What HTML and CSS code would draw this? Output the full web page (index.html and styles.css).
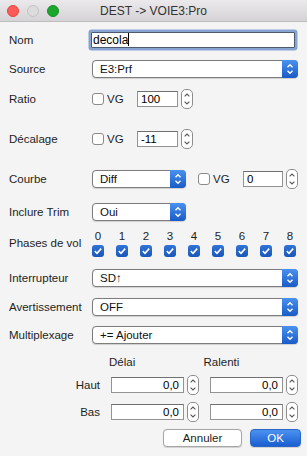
FILE: index.html
```html
<!DOCTYPE html>
<html lang="fr">
<head>
    <meta charset="UTF-8">
    <title>DEST -> VOIE3:Pro</title>
    <link rel="stylesheet" href="styles.css">
</head>
<body>
    <div class="titlebar">
        <div class="lights">
            <span class="light red"></span>
            <span class="light idle"></span>
            <span class="light green"></span>
        </div>
        <div class="title">DEST -&gt; VOIE3:Pro</div>
        <div></div>
    </div>

    <div class="form">
        <div class="row r-nom">
            <span class="label">Nom</span>
            <div class="text-field focused">decola<span class="caret"></span></div>
        </div>

        <div class="row r-source">
            <span class="label">Source</span>
            <div class="select">
                <span class="value">E3:Prf</span>
                <span class="arrows"><svg width="16" height="18" viewBox="0 0 16 18"><path d="M5.5 7.2 L8 4.7 L10.5 7.2 M5.5 10.8 L8 13.3 L10.5 10.8" fill="none" stroke="#fff" stroke-width="1.4"/></svg></span>
            </div>
        </div>

        <div class="row r-ratio">
            <span class="label">Ratio</span>
            <span class="check"></span>
            <span class="vg">VG</span>
            <div class="num">100</div>
            <svg class="stepper" width="12" height="20" viewBox="0 0 12 20"><rect x="0.5" y="0.5" width="11" height="19" rx="4.5" fill="#fff" stroke="#8d8d8d"/><path d="M3.6 7.4 L6 5 L8.4 7.4 M3.6 12.6 L6 15 L8.4 12.6" fill="none" stroke="#555" stroke-width="1.1"/></svg>
        </div>

        <div class="row r-decalage">
            <span class="label">Décalage</span>
            <span class="check"></span>
            <span class="vg">VG</span>
            <div class="num">-11</div>
            <svg class="stepper" width="12" height="20" viewBox="0 0 12 20"><rect x="0.5" y="0.5" width="11" height="19" rx="4.5" fill="#fff" stroke="#8d8d8d"/><path d="M3.6 7.4 L6 5 L8.4 7.4 M3.6 12.6 L6 15 L8.4 12.6" fill="none" stroke="#555" stroke-width="1.1"/></svg>
        </div>

        <div class="row r-courbe">
            <span class="label">Courbe</span>
            <div class="select short">
                <span class="value">Diff</span>
                <span class="arrows"><svg width="16" height="18" viewBox="0 0 16 18"><path d="M5.5 7.2 L8 4.7 L10.5 7.2 M5.5 10.8 L8 13.3 L10.5 10.8" fill="none" stroke="#fff" stroke-width="1.4"/></svg></span>
            </div>
            <span class="check after-select"></span>
            <span class="vg">VG</span>
            <div class="num">0</div>
            <svg class="stepper" width="12" height="20" viewBox="0 0 12 20"><rect x="0.5" y="0.5" width="11" height="19" rx="4.5" fill="#fff" stroke="#8d8d8d"/><path d="M3.6 7.4 L6 5 L8.4 7.4 M3.6 12.6 L6 15 L8.4 12.6" fill="none" stroke="#555" stroke-width="1.1"/></svg>
        </div>

        <div class="row r-trim">
            <span class="label">Inclure Trim</span>
            <div class="select short">
                <span class="value">Oui</span>
                <span class="arrows"><svg width="16" height="18" viewBox="0 0 16 18"><path d="M5.5 7.2 L8 4.7 L10.5 7.2 M5.5 10.8 L8 13.3 L10.5 10.8" fill="none" stroke="#fff" stroke-width="1.4"/></svg></span>
            </div>
        </div>

        <div class="row r-phases">
            <span class="label">Phases de vol</span>
            <div class="phases">
                <span class="phase-num">0</span>
                <span class="phase-num">1</span>
                <span class="phase-num">2</span>
                <span class="phase-num">3</span>
                <span class="phase-num">4</span>
                <span class="phase-num">5</span>
                <span class="phase-num">6</span>
                <span class="phase-num">7</span>
                <span class="phase-num">8</span>
                <span class="check on"><svg width="12" height="12" viewBox="0 0 12 12"><path d="M2.8 6.1 L5 8.3 L9.2 3.6" fill="none" stroke="#fff" stroke-width="1.6"/></svg></span>
                <span class="check on"><svg width="12" height="12" viewBox="0 0 12 12"><path d="M2.8 6.1 L5 8.3 L9.2 3.6" fill="none" stroke="#fff" stroke-width="1.6"/></svg></span>
                <span class="check on"><svg width="12" height="12" viewBox="0 0 12 12"><path d="M2.8 6.1 L5 8.3 L9.2 3.6" fill="none" stroke="#fff" stroke-width="1.6"/></svg></span>
                <span class="check on"><svg width="12" height="12" viewBox="0 0 12 12"><path d="M2.8 6.1 L5 8.3 L9.2 3.6" fill="none" stroke="#fff" stroke-width="1.6"/></svg></span>
                <span class="check on"><svg width="12" height="12" viewBox="0 0 12 12"><path d="M2.8 6.1 L5 8.3 L9.2 3.6" fill="none" stroke="#fff" stroke-width="1.6"/></svg></span>
                <span class="check on"><svg width="12" height="12" viewBox="0 0 12 12"><path d="M2.8 6.1 L5 8.3 L9.2 3.6" fill="none" stroke="#fff" stroke-width="1.6"/></svg></span>
                <span class="check on"><svg width="12" height="12" viewBox="0 0 12 12"><path d="M2.8 6.1 L5 8.3 L9.2 3.6" fill="none" stroke="#fff" stroke-width="1.6"/></svg></span>
                <span class="check on"><svg width="12" height="12" viewBox="0 0 12 12"><path d="M2.8 6.1 L5 8.3 L9.2 3.6" fill="none" stroke="#fff" stroke-width="1.6"/></svg></span>
                <span class="check on"><svg width="12" height="12" viewBox="0 0 12 12"><path d="M2.8 6.1 L5 8.3 L9.2 3.6" fill="none" stroke="#fff" stroke-width="1.6"/></svg></span>
            </div>
        </div>

        <div class="row r-inter">
            <span class="label">Interrupteur</span>
            <div class="select">
                <span class="value">SD↑</span>
                <span class="arrows"><svg width="16" height="18" viewBox="0 0 16 18"><path d="M5.5 7.2 L8 4.7 L10.5 7.2 M5.5 10.8 L8 13.3 L10.5 10.8" fill="none" stroke="#fff" stroke-width="1.4"/></svg></span>
            </div>
        </div>

        <div class="row r-avert">
            <span class="label">Avertissement</span>
            <div class="select">
                <span class="value">OFF</span>
                <span class="arrows"><svg width="16" height="18" viewBox="0 0 16 18"><path d="M5.5 7.2 L8 4.7 L10.5 7.2 M5.5 10.8 L8 13.3 L10.5 10.8" fill="none" stroke="#fff" stroke-width="1.4"/></svg></span>
            </div>
        </div>

        <div class="row r-multi">
            <span class="label">Multiplexage</span>
            <div class="select">
                <span class="value">+= Ajouter</span>
                <span class="arrows"><svg width="16" height="18" viewBox="0 0 16 18"><path d="M5.5 7.2 L8 4.7 L10.5 7.2 M5.5 10.8 L8 13.3 L10.5 10.8" fill="none" stroke="#fff" stroke-width="1.4"/></svg></span>
            </div>
        </div>

        <div class="row r-heads">
            <span class="head-spacer"></span>
            <span class="head">Délai</span>
            <span class="head">Ralenti</span>
        </div>

        <div class="row r-haut">
            <span class="label right">Haut</span>
            <div class="num wide">0,0</div>
            <svg class="stepper" width="12" height="20" viewBox="0 0 12 20"><rect x="0.5" y="0.5" width="11" height="19" rx="4.5" fill="#fff" stroke="#8d8d8d"/><path d="M3.6 7.4 L6 5 L8.4 7.4 M3.6 12.6 L6 15 L8.4 12.6" fill="none" stroke="#555" stroke-width="1.1"/></svg>
            <div class="num wide second">0,0</div>
            <svg class="stepper" width="12" height="20" viewBox="0 0 12 20"><rect x="0.5" y="0.5" width="11" height="19" rx="4.5" fill="#fff" stroke="#8d8d8d"/><path d="M3.6 7.4 L6 5 L8.4 7.4 M3.6 12.6 L6 15 L8.4 12.6" fill="none" stroke="#555" stroke-width="1.1"/></svg>
        </div>

        <div class="row r-bas">
            <span class="label right">Bas</span>
            <div class="num wide">0,0</div>
            <svg class="stepper" width="12" height="20" viewBox="0 0 12 20"><rect x="0.5" y="0.5" width="11" height="19" rx="4.5" fill="#fff" stroke="#8d8d8d"/><path d="M3.6 7.4 L6 5 L8.4 7.4 M3.6 12.6 L6 15 L8.4 12.6" fill="none" stroke="#555" stroke-width="1.1"/></svg>
            <div class="num wide second">0,0</div>
            <svg class="stepper" width="12" height="20" viewBox="0 0 12 20"><rect x="0.5" y="0.5" width="11" height="19" rx="4.5" fill="#fff" stroke="#8d8d8d"/><path d="M3.6 7.4 L6 5 L8.4 7.4 M3.6 12.6 L6 15 L8.4 12.6" fill="none" stroke="#555" stroke-width="1.1"/></svg>
        </div>

        <div class="row r-buttons">
            <button class="btn">Annuler</button>
            <button class="btn primary">OK</button>
        </div>
    </div>
</body>
</html>
```

FILE: styles.css
```css
body {
    margin: 0;
    background: #f4f4f4;
    font-family: "Liberation Sans", Arial, sans-serif;
    font-size: 11.5px;
    color: #1e1e1e;
}
.titlebar {
    height: 21px;
    border-bottom: 1px solid #bdbdbd;
    background: linear-gradient(#ebe9eb, #d5d3d5);
    display: grid;
    grid-template-columns: 1fr auto 1fr;
    align-items: center;
}
.lights {
    display: flex;
    gap: 8px;
    padding-left: 7px;
    padding-top: 1px;
}
.light {
    width: 12px;
    height: 12px;
    border-radius: 50%;
    box-sizing: border-box;
}
.light.red {
    background: #fc5b57;
    border: 1px solid #e2443f;
}
.light.idle {
    background: #dcdcdc;
    border: 1px solid #c4c4c4;
}
.light.green {
    background: #1ba72b;
    border: 1px solid #15902a;
}
.title {
    font-size: 12px;
    color: #333;
    padding-top: 1px;
}
.form {
    padding: 0 9px;
}
.row {
    display: flex;
    align-items: center;
    height: 20px;
}
.label {
    width: 83px;
    flex: none;
}
.label.right {
    width: 91px;
    text-align: right;
    margin-right: 11px;
}
.r-nom { margin-top: 8px; }
.r-source { margin-top: 9px; }
.r-ratio { margin-top: 10px; }
.r-decalage { margin-top: 20px; }
.r-courbe { margin-top: 20px; }
.r-trim { margin-top: 13px; }
.r-phases { margin-top: 7px; height: 28px; }
.r-inter { margin-top: 11px; }
.r-avert { margin-top: 9px; }
.r-multi { margin-top: 8px; }
.r-heads { margin-top: 7px; }
.r-haut { margin-top: 3px; }
.r-bas { margin-top: 7px; }
.r-buttons {
    margin-top: 6px;
    justify-content: flex-end;
    gap: 8px;
    margin-right: -3px;
}
.text-field {
    width: 204px;
    height: 16px;
    margin-left: -1px;
    box-sizing: border-box;
    background: #fff;
    border: 1px solid #4d5b6e;
    box-shadow: 0 0 0 2.5px #86a4cf;
    border-radius: 1px;
    padding-left: 1px;
    line-height: 14px;
    font-size: 12px;
    color: #000;
}
.caret {
    display: inline-block;
    width: 1px;
    height: 13px;
    background: #000;
    vertical-align: -2px;
}
.select {
    display: flex;
    width: 206px;
    height: 18px;
    box-sizing: border-box;
    background: #fff;
    border: 1px solid #7d7d7d;
    border-radius: 4px;
    box-shadow: 0 0.5px 1px rgba(0, 0, 0, 0.15);
}
.select.short {
    width: 94px;
}
.select .value {
    flex: 1;
    padding-left: 7px;
    line-height: 16px;
    color: #111;
}
.select .arrows {
    display: flex;
    width: 16px;
    margin: -1px -1px -1px 0;
    border-radius: 0 4px 4px 0;
    background: linear-gradient(#4a91f0, #1a5bc6);
}
.check {
    width: 12px;
    height: 12px;
    flex: none;
    box-sizing: border-box;
    background: #fff;
    border: 1px solid #8b8b8b;
    border-radius: 3px;
}
.check.on {
    border: none;
    background: linear-gradient(#2f74d8, #1a56b9);
}
.check svg {
    display: block;
}
.check.after-select {
    margin-left: 12px;
}
.vg {
    width: 33px;
    box-sizing: border-box;
    padding-left: 3px;
    flex: none;
}
.num {
    width: 41px;
    height: 16px;
    box-sizing: border-box;
    background: #fff;
    border: 1px solid #939393;
    border-top-color: #6f6f6f;
    padding-left: 3px;
    line-height: 14px;
    color: #000;
}
.num.wide {
    width: 74px;
    text-align: right;
    padding-right: 4px;
}
.num.second {
    margin-left: 11px;
}
.stepper {
    margin-left: 3px;
    flex: none;
}
.r-courbe .num {
    width: 40px;
}
.phases {
    display: grid;
    grid-template-columns: repeat(9, 12px);
    column-gap: 12px;
    row-gap: 2px;
}
.phase-num {
    text-align: center;
    line-height: 14px;
}
.head-spacer {
    width: 100px;
    flex: none;
}
.head {
    width: 100px;
}
.btn {
    height: 18px;
    box-sizing: border-box;
    border-radius: 4px;
    font-family: inherit;
    font-size: 11.5px;
    padding: 0;
    background: #fff;
    border: 1px solid #a6a6a6;
    box-shadow: 0 0.5px 1px rgba(0, 0, 0, 0.15);
    color: #1e1e1e;
    width: 79px;
}
.btn.primary {
    width: 51px;
    border-color: #2a66c4;
    background: linear-gradient(#4c92f1, #1a5ed0);
    color: #fff;
}
```
